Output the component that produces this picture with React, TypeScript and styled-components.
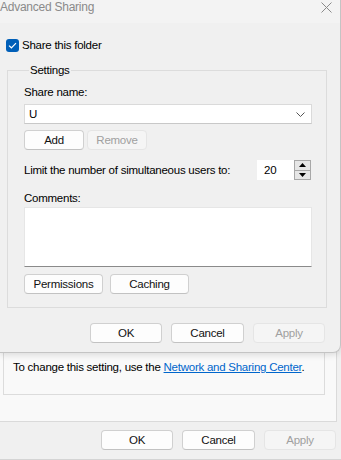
import React from 'react'
import styled, { createGlobalStyle } from 'styled-components'

const GlobalStyle = createGlobalStyle`
  html, body {
    margin: 0;
    padding: 0;
  }
  body {
    width: 341px;
    height: 460px;
    overflow: hidden;
    background: #f0f0f0;
    font-family: "Liberation Sans", Arial, sans-serif;
    font-size: 11.5px;
    letter-spacing: -0.25px;
    color: #000;
  }
`

const Desktop = styled.div`
  position: relative;
  width: 341px;
  height: 460px;
  overflow: hidden;
`

/* window behind (folder properties) */
const BackWindow = styled.div`
  display: flex;
  flex-direction: column;
  height: 100%;
  box-sizing: border-box;
  background: #f0f0f0;
  border-bottom: 1px solid #d4d4d4;
`

const TabPage = styled.div`
  flex: 1;
  display: flex;
  flex-direction: column;
  justify-content: flex-end;
  margin-right: 4px;
  padding: 0 0 26px 3px;
  background: #f9f9f9;
  border-right: 1px solid #dadada;
  border-bottom: 1px solid #dadada;
`

const InfoBox = styled.div`
  width: 322px;
  box-sizing: border-box;
  padding: 60px 9px 19px;
  border: 1px solid #dcdcdc;
  line-height: 16px;
  white-space: nowrap;
`

const Link = styled.a`
  color: #0066cc;
  text-decoration: underline;
  cursor: pointer;
`

const ButtonRow = styled.div<{ $padRight: number; $padTop: number; $padBottom: number }>`
  display: flex;
  justify-content: flex-end;
  gap: 9px;
  padding: ${({ $padTop, $padRight, $padBottom }) => `${$padTop}px ${$padRight}px ${$padBottom}px 0`};
`

const Button = styled.button<{ $w?: number }>`
  all: unset;
  box-sizing: border-box;
  display: flex;
  align-items: center;
  justify-content: center;
  width: ${({ $w }) => $w ?? 72}px;
  height: 20px;
  font-family: inherit;
  font-size: 11.5px;
  letter-spacing: -0.25px;
  color: #111;
  background: #fdfdfd;
  border: 1px solid #d0d0d0;
  border-bottom-color: #c2c2c2;
  border-radius: 4px;

  &:disabled {
    color: #a0a0a0;
    background: #f5f5f5;
    border-color: #e5e5e5;
  }
`

/* Advanced Sharing dialog in front */
const Dialog = styled.div`
  position: absolute;
  top: 0;
  left: 0;
  width: 341px;
  height: 353px;
  box-sizing: border-box;
  display: flex;
  flex-direction: column;
  background: #f0f0f0;
  border-right: 1px solid #c4c4c4;
  border-bottom: 1px solid #c4c4c4;
  border-bottom-right-radius: 8px;
  box-shadow: 0 2px 6px rgba(0, 0, 0, 0.12);
`

const TitleBar = styled.div`
  display: flex;
  justify-content: space-between;
  height: 23px;
  background: #f3f3f3;
  color: #8a8a8a;
  line-height: 15px;
  font-size: 12px;
`

const CloseIcon = styled.svg`
  margin: 2px 8px 0 0;
`

const Body = styled.div`
  display: flex;
  flex-direction: column;
  padding-top: 14px;
`

const CheckRow = styled.label`
  display: flex;
  align-items: center;
  gap: 3px;
  height: 16px;
  padding-left: 6px;
`

const CheckBox = styled.span`
  display: flex;
  align-items: center;
  justify-content: center;
  width: 13px;
  height: 13px;
  border-radius: 3px;
  background: #005fb8;
`

const Group = styled.fieldset`
  margin: 9px 0 0 7px;
  width: 320px;
  box-sizing: border-box;
  padding: 0 14px 13px 16px;
  border: 1px solid #dcdcdc;
  display: flex;
  flex-direction: column;
`

const Legend = styled.legend`
  padding: 0 1px;
  margin-left: 5px;
  line-height: 16px;
`

const FieldLabel = styled.div<{ $top: number }>`
  margin-top: ${({ $top }) => $top}px;
  line-height: 16px;
`

const Combo = styled.div`
  display: flex;
  align-items: center;
  justify-content: space-between;
  margin-top: 4px;
  height: 20px;
  box-sizing: border-box;
  padding: 0 6px 0 4px;
  background: #fff;
  border: 1px solid #dadada;
  border-bottom-color: #c8c8c8;
`

const InlineButtons = styled.div<{ $top: number; $gap: number }>`
  display: flex;
  gap: ${({ $gap }) => $gap}px;
  margin-top: ${({ $top }) => $top}px;
`

const LimitRow = styled.div`
  display: flex;
  align-items: center;
  justify-content: space-between;
  margin-top: 10px;
  height: 20px;
`

const Spinner = styled.div`
  display: flex;
  height: 20px;
  margin-right: 1px;
`

const SpinValue = styled.div`
  width: 37px;
  box-sizing: border-box;
  padding-left: 7px;
  line-height: 20px;
  background: #fff;
`

const SpinButtons = styled.div`
  display: flex;
  flex-direction: column;
  width: 17px;
  box-sizing: border-box;
  border: 1px solid #a8a8a8;
  background: #e6e6e6;
`

const SpinButton = styled.div<{ $down?: boolean }>`
  flex: 1;
  display: flex;
  align-items: center;
  justify-content: center;
  border-top: ${({ $down }) => ($down ? '1px solid #a8a8a8' : 'none')};
`

const Comments = styled.div`
  margin-top: 1px;
  height: 60px;
  box-sizing: border-box;
  background: #fff;
  border: 1px solid #e6e6e6;
  border-bottom: 1px solid #8a8a8a;
`

const App: React.FC = () => {
  return (
    <>
      <GlobalStyle />
      <Desktop>
        <BackWindow>
          <TabPage>
            <InfoBox>
              To change this setting, use the <Link>Network and Sharing Center</Link>.
            </InfoBox>
          </TabPage>
          <ButtonRow $padTop={8} $padRight={5} $padBottom={9}>
            <Button $w={72}>OK</Button>
            <Button $w={73}>Cancel</Button>
            <Button $w={72} disabled>Apply</Button>
          </ButtonRow>
        </BackWindow>

        <Dialog>
          <TitleBar>
            <span>Advanced Sharing</span>
            <CloseIcon width="11" height="11" viewBox="0 0 11 11">
              <path d="M0.5 0.5 L10.5 10.5 M10.5 0.5 L0.5 10.5" stroke="#8a8a8a" strokeWidth="1" fill="none" />
            </CloseIcon>
          </TitleBar>
          <Body>
            <CheckRow>
              <CheckBox>
                <svg width="9" height="7" viewBox="0 0 9 7">
                  <path d="M1 3.6 L3.4 5.8 L8 1.2" stroke="#fff" strokeWidth="1.2" fill="none" />
                </svg>
              </CheckBox>
              Share this folder
            </CheckRow>

            <Group>
              <Legend>Settings</Legend>
              <FieldLabel $top={6}>Share name:</FieldLabel>
              <Combo>
                <span>U</span>
                <svg width="9" height="5" viewBox="0 0 9 5">
                  <path d="M0.5 0.5 L4.5 4.5 L8.5 0.5" stroke="#555" strokeWidth="1" fill="none" />
                </svg>
              </Combo>
              <InlineButtons $top={6} $gap={3}>
                <Button $w={60}>Add</Button>
                <Button $w={60} disabled>Remove</Button>
              </InlineButtons>
              <LimitRow>
                <span>Limit the number of simultaneous users to:</span>
                <Spinner>
                  <SpinValue>20</SpinValue>
                  <SpinButtons>
                    <SpinButton>
                      <svg width="7" height="4" viewBox="0 0 7 4"><path d="M3.5 0 L7 4 L0 4 Z" fill="#000" /></svg>
                    </SpinButton>
                    <SpinButton $down>
                      <svg width="7" height="4" viewBox="0 0 7 4"><path d="M0 0 L7 0 L3.5 4 Z" fill="#000" /></svg>
                    </SpinButton>
                  </SpinButtons>
                </Spinner>
              </LimitRow>
              <FieldLabel $top={10}>Comments:</FieldLabel>
              <Comments />
              <InlineButtons $top={7} $gap={7}>
                <Button $w={79}>Permissions</Button>
                <Button $w={79}>Caching</Button>
              </InlineButtons>
            </Group>

            <ButtonRow $padTop={15} $padRight={15} $padBottom={0}>
              <Button $w={72}>OK</Button>
              <Button $w={73}>Cancel</Button>
              <Button $w={72} disabled>Apply</Button>
            </ButtonRow>
          </Body>
        </Dialog>
      </Desktop>
    </>
  )
}

export default App
